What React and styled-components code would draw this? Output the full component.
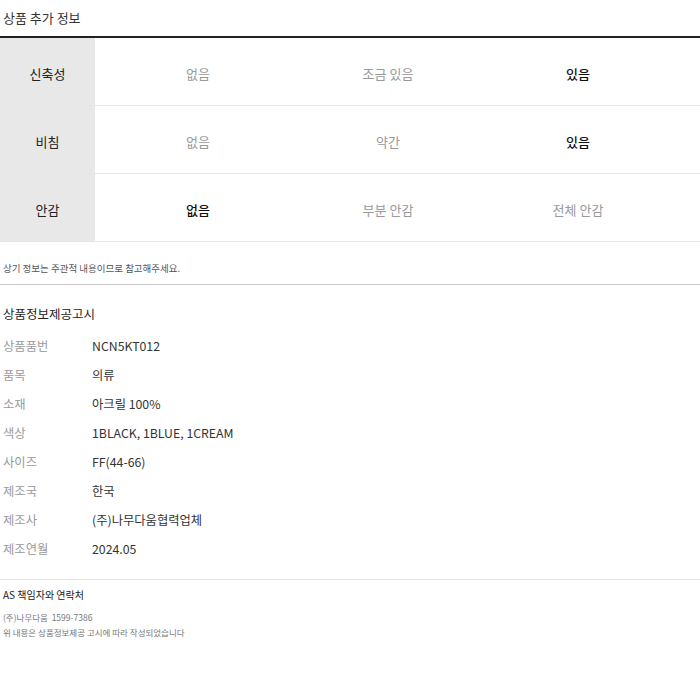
import React from 'react'
import styled, {createGlobalStyle} from 'styled-components'

const GlobalStyle = createGlobalStyle`
    body {
        margin: 0;
        background: #fff;
        font-family: "Noto Sans CJK KR", "Noto Sans", sans-serif;
        color: #222;
    }
`

const Page = styled.div`
    width: 700px;
`

const Title = styled.h2`
    margin: 0;
    height: 36px;
    line-height: 35px;
    padding-left: 3px;
    font-size: 13px;
    font-weight: 400;
    color: #333;
`

const Table = styled.div`
    border-top: 2px solid #222;
`

const Row = styled.div`
    display: grid;
    grid-template-columns: 95px 8px repeat(3, 190px) 1fr;
    height: 67px;
    border-bottom: 1px solid #e6e6e6;
`

const Label = styled.div`
    display: flex;
    align-items: center;
    justify-content: center;
    padding-top: 3px;
    background: #e8e8e8;
    font-size: 13px;
    color: #222;
`

const Cell = styled.div`
    display: flex;
    align-items: center;
    justify-content: center;
    padding-top: 3px;
    font-size: 13px;
    color: ${p => (p.$on ? '#111' : '#999')};
    font-weight: ${p => (p.$on ? 500 : 400)};
    grid-column: ${p => p.$col + 2};
`

const Note = styled.p`
    margin: 0;
    padding: 19px 0 0 3px;
    height: 23px;
    font-size: 9.5px;
    color: #555;
    border-bottom: 1px solid #c8c8c8;
`

const Notice = styled.section`
    padding: 18px 0 16px 3px;
    border-bottom: 1px solid #e4e4e4;
`

const NoticeTitle = styled.h3`
    margin: 0 0 6px;
    font-size: 12.5px;
    font-weight: 400;
    line-height: 22px;
    color: #222;
`

const InfoRow = styled.div`
    display: grid;
    grid-template-columns: 89px 1fr;
    height: 29px;
    align-items: center;
    font-size: 12.3px;
`

const InfoKey = styled.span`
    color: #9a9a9a;
`

const InfoVal = styled.span`
    color: #333;
`

const Contact = styled.section`
    padding: 7px 0 0 3px;
`

const ContactTitle = styled.h4`
    margin: 0 0 7px;
    font-size: 10px;
    font-weight: 400;
    line-height: 16px;
    color: #222;
`

const Small = styled.p`
    margin: 0;
    font-size: 8.5px;
    line-height: 15px;
    color: #777;
`

const options = [
    {label: '신축성', values: ['없음', '조금 있음', '있음'], on: 2},
    {label: '비침', values: ['없음', '약간', '있음'], on: 2},
    {label: '안감', values: ['없음', '부분 안감', '전체 안감'], on: 0},
]

const info = [
    ['상품품번', 'NCN5KT012'],
    ['품목', '의류'],
    ['소재', '아크릴 100%'],
    ['색상', '1BLACK, 1BLUE, 1CREAM'],
    ['사이즈', 'FF(44-66)'],
    ['제조국', '한국'],
    ['제조사', '(주)나무다움협력업체'],
    ['제조연월', '2024.05'],
]

const App = () => {
    return (
        <Page>
            <GlobalStyle />
            <Title>상품 추가 정보</Title>
            <Table>
                {options.map(opt => (
                    <Row key={opt.label}>
                        <Label>{opt.label}</Label>
                        {opt.values.map((v, i) => (
                            <Cell key={v} $col={i + 1} $on={i === opt.on}>{v}</Cell>
                        ))}
                    </Row>
                ))}
            </Table>
            <Note>상기 정보는 주관적 내용이므로 참고해주세요.</Note>
            <Notice>
                <NoticeTitle>상품정보제공고시</NoticeTitle>
                {info.map(([k, v]) => (
                    <InfoRow key={k}>
                        <InfoKey>{k}</InfoKey>
                        <InfoVal>{v}</InfoVal>
                    </InfoRow>
                ))}
            </Notice>
            <Contact>
                <ContactTitle>AS 책임자와 연락처</ContactTitle>
                <Small>(주)나무다움&nbsp; 1599-7386</Small>
                <Small>위 내용은 상품정보제공 고시에 따라 작성되었습니다</Small>
            </Contact>
        </Page>
    )
}

export default App
